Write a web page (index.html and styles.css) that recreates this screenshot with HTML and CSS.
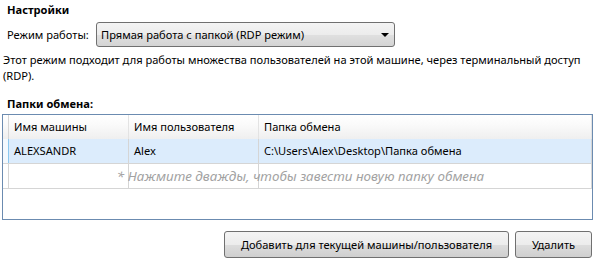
FILE: index.html
```html
<!DOCTYPE html>
<html lang="ru">
<head>
<meta charset="utf-8">
<title>Настройки</title>
<link rel="stylesheet" href="styles.css">
</head>
<body>
<div class="page">
  <div class="title">Настройки</div>
  <div class="mode-row">
    <span class="mode-label">Режим работы:</span>
    <div class="combo">
      <span class="combo-text">Прямая работа с папкой (RDP режим)</span>
      <span class="combo-arrow"></span>
    </div>
  </div>
  <div class="desc">Этот режим подходит для работы множества пользователей на этой машине, через терминальный доступ (RDP).</div>
  <div class="section">Папки обмена:</div>
  <div class="grid">
    <div class="row header">
      <div class="cell gutter"></div>
      <div class="cell">Имя машины</div>
      <div class="cell">Имя пользователя</div>
      <div class="cell last">Папка обмена</div>
    </div>
    <div class="row selected">
      <div class="cell gutter"></div>
      <div class="cell">ALEXSANDR</div>
      <div class="cell">Alex</div>
      <div class="cell last">C:\Users\Alex\Desktop\Папка обмена</div>
    </div>
    <div class="row newrow">
      <div class="cell gutter"></div>
      <div class="cell"></div>
      <div class="cell"></div>
      <div class="cell last"></div>
      <span class="hint">* Нажмите дважды, чтобы завести новую папку обмена</span>
    </div>
  </div>
  <div class="buttons">
    <button class="btn btn-add">Добавить для текущей машины/пользователя</button>
    <button class="btn btn-del">Удалить</button>
  </div>
</div>
</body>
</html>
```

FILE: styles.css
```css
html, body {
  margin: 0;
  padding: 0;
  background: #ffffff;
}
body {
  font-family: "Noto Sans", "Open Sans", sans-serif;
  font-size: 11.1px;
  color: #000000;
  line-height: 16px;
}
.page {
  width: 596px;
  height: 265px;
  overflow: hidden;
}
.title {
  margin: 2px 0 0 7px;
  height: 16px;
  font-weight: bold;
}
.mode-row {
  margin: 4px 0 0 7px;
  height: 25px;
  display: flex;
  align-items: center;
}
.mode-label {
  width: 89px;
}
.combo {
  width: 299px;
  height: 25px;
  box-sizing: border-box;
  border: 1px solid #707070;
  border-radius: 3px;
  background: linear-gradient(to bottom, #f4f4f4 0%, #ececec 50%, #e0e0e0 51%, #d4d4d4 100%);
  display: flex;
  align-items: center;
  padding: 0 0 0 4px;
}
.combo-text {
  flex: 1;
}
.combo-arrow {
  width: 0;
  height: 0;
  border-left: 4px solid transparent;
  border-right: 4px solid transparent;
  border-top: 4px solid #000000;
  margin-right: 5px;
}
.desc {
  margin: 5px 4px 0 3px;
  height: 32px;
}
.section {
  margin: 12px 0 0 7px;
  height: 16px;
  font-weight: bold;
}
.grid {
  margin: 2px 0 0 2px;
  width: 591px;
  height: 106px;
  box-sizing: border-box;
  border: 1px solid #6b8bb0;
  background: #ffffff;
}
.row {
  display: grid;
  grid-template-columns: 6px 120px 130px 1fr;
  position: relative;
}
.cell {
  box-sizing: border-box;
  border-right: 1px solid #d5d5d5;
  padding-left: 5px;
  display: flex;
  align-items: center;
  white-space: nowrap;
  overflow: hidden;
}
.cell.gutter {
  padding: 0;
}
.header {
  height: 24px;
  background: linear-gradient(to bottom, #ffffff 0%, #fafafa 40%, #efefef 100%);
}
.header .cell {
  border-right-color: #e3e3e3;
}
.header .cell.gutter {
  border-right-color: #d5d5d5;
}
.selected {
  height: 25px;
  border-bottom: 1px solid #d5d5d5;
  box-sizing: border-box;
}
.selected .cell {
  background: #dcecfc;
}
.selected .cell.gutter {
  background: #f4f9fe;
  border-right-color: #8cc8ef;
}
.newrow {
  height: 25px;
  border-bottom: 1px solid #d5d5d5;
  box-sizing: border-box;
}
.hint {
  position: absolute;
  left: 6px;
  right: 0;
  top: 0;
  bottom: 0;
  display: flex;
  align-items: center;
  justify-content: center;
  font-style: italic;
  font-size: 13.4px;
  color: #a2a2a2;
}
.buttons {
  margin: 11px 4px 0 0;
  display: flex;
  justify-content: flex-end;
  gap: 6px;
}
.btn {
  height: 27px;
  box-sizing: border-box;
  border: 1px solid #707070;
  border-radius: 3px;
  background: linear-gradient(to bottom, #f4f4f4 0%, #ececec 50%, #dddddd 51%, #cfcfcf 100%);
  font-family: inherit;
  font-size: 11.1px;
  color: #000000;
  padding: 0;
}
.btn-add {
  width: 285px;
}
.btn-del {
  width: 77px;
}
```
